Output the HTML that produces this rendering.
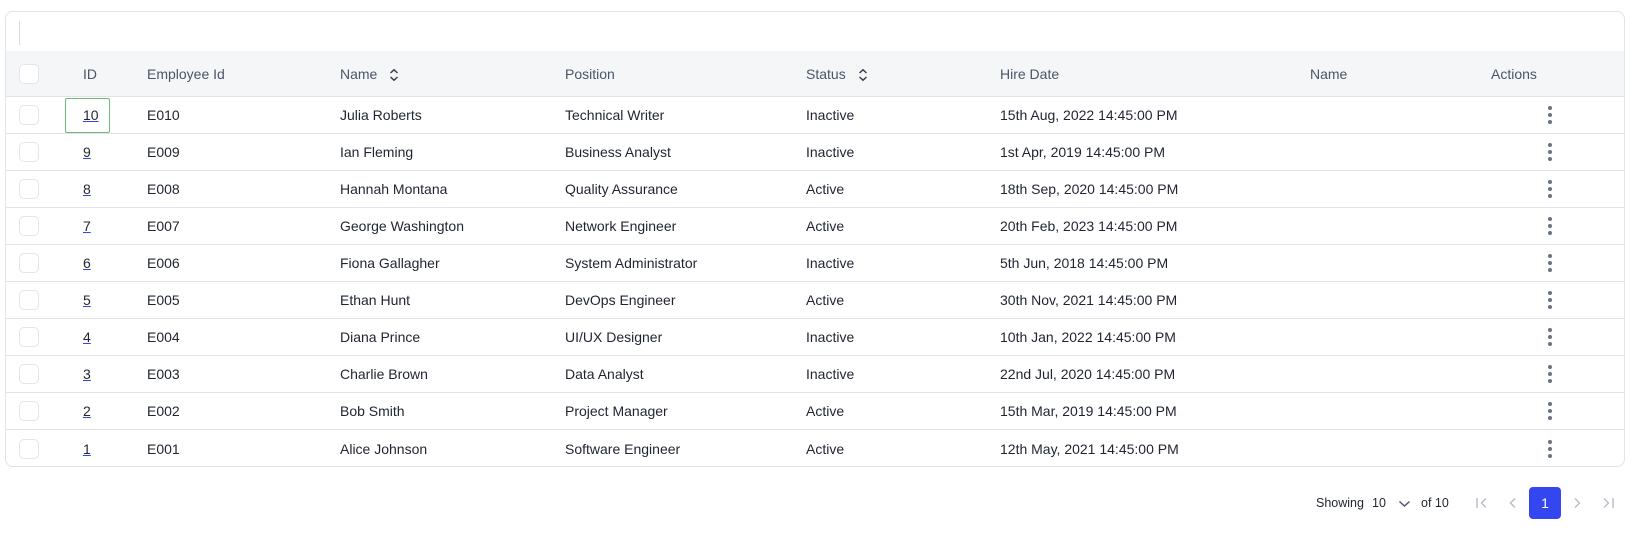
<!DOCTYPE html>
<html><head><style>
*{box-sizing:border-box;margin:0;padding:0}
body{width:1645px;height:556px;background:#fff;font-family:"Liberation Sans",sans-serif;font-size:14px;color:#1f2430;position:relative;overflow:hidden}
.box{position:absolute;left:5px;top:11px;width:1620px;height:456px;border:1px solid #e2e3ea;border-radius:8px;overflow:hidden}
.bar{position:absolute;left:13px;top:9px;width:1px;height:24px;background:#d8d9e0}
.hdr{position:absolute;left:0;top:39px;width:100%;height:46px;background:#f5f6f8;border-bottom:1px solid #e2e3ea;color:#4a5568}
.row{position:absolute;left:0;width:100%;height:37px;border-bottom:1px solid #e2e3ea}
.c{position:absolute;top:50%;transform:translateY(-50%);white-space:nowrap}
.cb{position:absolute;left:13px;top:50%;margin-top:-10px;width:20px;height:20px;border:1px solid #e4e5ea;border-radius:5px;background:#fff}
a{color:#1f2430;text-decoration:underline;text-decoration-color:#3344dd}
.dots{position:absolute;left:1542px;top:50%;margin-top:-9px;width:4px;height:18px}
.dots i{display:block;width:4px;height:4px;border-radius:2px;background:#6b7280;margin-bottom:3px}
.sel{position:absolute;left:59px;top:1px;width:45px;height:35px;border:1.5px solid #6dbb72;border-radius:2px}
.pg{position:absolute;top:503px;transform:translateY(-50%);font-size:12.5px}
</style></head><body>
<div class="box">
<div class="bar"></div>
<div class="hdr">
<div class="cb"></div>
<span class="c" style="left:77px">ID</span>
<span class="c" style="left:141px">Employee Id</span>
<span class="c" style="left:334px">Name <svg width="12" height="14" viewBox="0 0 12 14" style="vertical-align:-3px;margin-left:7px"><path d="M2.5 5 6 1.8 9.5 5M2.5 9 6 12.2 9.5 9" fill="none" stroke="#3a4150" stroke-width="1.5"/></svg></span>
<span class="c" style="left:559px">Position</span>
<span class="c" style="left:800px">Status <svg width="12" height="14" viewBox="0 0 12 14" style="vertical-align:-3px;margin-left:7px"><path d="M2.5 5 6 1.8 9.5 5M2.5 9 6 12.2 9.5 9" fill="none" stroke="#3a4150" stroke-width="1.5"/></svg></span>
<span class="c" style="left:994px">Hire Date</span>
<span class="c" style="left:1304px">Name</span>
<span class="c" style="left:1485px">Actions</span>
</div>
<div id="rows"></div>
</div>
<span class="pg" style="left:1316px">Showing</span>
<span class="pg" style="left:1372px">10</span>
<svg style="position:absolute;left:1398px;top:500px" width="13" height="8" viewBox="0 0 13 8"><path d="M1.5 1.5 6.5 6 11.5 1.5" fill="none" stroke="#4a5568" stroke-width="1.4"/></svg>
<span class="pg" style="left:1421px">of 10</span>
<svg style="position:absolute;left:1475px;top:497px" width="14" height="12" viewBox="0 0 14 12"><path d="M2 1v10M11 1.5 6.5 6 11 10.5" fill="none" stroke="#b8bcc4" stroke-width="1.4"/></svg>
<svg style="position:absolute;left:1507px;top:497px" width="12" height="12" viewBox="0 0 12 12"><path d="M8 1.5 3.5 6 8 10.5" fill="none" stroke="#b8bcc4" stroke-width="1.4"/></svg>
<div style="position:absolute;left:1529px;top:487px;width:32px;height:32px;background:#3346ef;border-radius:4px;color:#fff;font-size:14px;text-align:center;line-height:32px">1</div>
<svg style="position:absolute;left:1571px;top:497px" width="12" height="12" viewBox="0 0 12 12"><path d="M4 1.5 8.5 6 4 10.5" fill="none" stroke="#b8bcc4" stroke-width="1.4"/></svg>
<svg style="position:absolute;left:1601px;top:497px" width="14" height="12" viewBox="0 0 14 12"><path d="M12 1v10M3 1.5 7.5 6 3 10.5" fill="none" stroke="#b8bcc4" stroke-width="1.4"/></svg>
<script>
var d=[["10","E010","Julia Roberts","Technical Writer","Inactive","15th Aug, 2022 14:45:00 PM"],
["9","E009","Ian Fleming","Business Analyst","Inactive","1st Apr, 2019 14:45:00 PM"],
["8","E008","Hannah Montana","Quality Assurance","Active","18th Sep, 2020 14:45:00 PM"],
["7","E007","George Washington","Network Engineer","Active","20th Feb, 2023 14:45:00 PM"],
["6","E006","Fiona Gallagher","System Administrator","Inactive","5th Jun, 2018 14:45:00 PM"],
["5","E005","Ethan Hunt","DevOps Engineer","Active","30th Nov, 2021 14:45:00 PM"],
["4","E004","Diana Prince","UI/UX Designer","Inactive","10th Jan, 2022 14:45:00 PM"],
["3","E003","Charlie Brown","Data Analyst","Inactive","22nd Jul, 2020 14:45:00 PM"],
["2","E002","Bob Smith","Project Manager","Active","15th Mar, 2019 14:45:00 PM"],
["1","E001","Alice Johnson","Software Engineer","Active","12th May, 2021 14:45:00 PM"]];
var h="";d.forEach(function(r,i){h+='<div class="row" style="top:'+(85+i*37)+'px;'+(i==9?'border-bottom:none':'')+'">'+(i==0?'<div class="sel"></div>':'')+'<div class="cb"></div><span class="c" style="left:77px"><a>'+r[0]+'</a></span><span class="c" style="left:141px">'+r[1]+'</span><span class="c" style="left:334px">'+r[2]+'</span><span class="c" style="left:559px">'+r[3]+'</span><span class="c" style="left:800px">'+r[4]+'</span><span class="c" style="left:994px">'+r[5]+'</span><div class="dots"><i></i><i></i><i></i></div></div>';});
document.getElementById("rows").innerHTML=h;
</script>
</body></html>
